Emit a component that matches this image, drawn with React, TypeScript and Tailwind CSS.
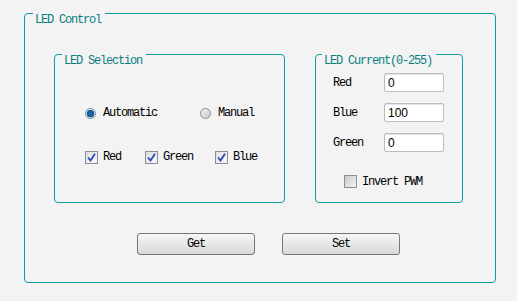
import React from 'react';

const font = "font-['Liberation_Mono',monospace] text-[12px] leading-[12px] tracking-[-1.2px]";

const GroupBox = ({
  title,
  titleOffset,
  className,
  children,
}: {
  title: string;
  titleOffset: string;
  className: string;
  children: React.ReactNode;
}) => {
  return (
    <fieldset className={`m-0 p-0 border border-[#129c9c] rounded-[4px] ${className}`}>
      <legend className={`${titleOffset} p-0 pt-[14px]`}>
        <span className={`block pl-[2px] pr-[4px] text-[#0a7e7e] ${font}`}>{title}</span>
      </legend>
      {children}
    </fieldset>
  );
};

const Radio = ({ checked, label, className }: { checked?: boolean; label: string; className: string }) => (
  <div className={`flex items-center gap-[7px] ${className}`}>
    <div
      className={`w-[11px] h-[11px] rounded-full border flex items-center justify-center ${
        checked
          ? 'border-[#6f8aa3] bg-gradient-to-b from-[#e8eef4] to-[#c4d2de]'
          : 'border-[#8d8d8d] bg-gradient-to-br from-[#f4f4f4] to-[#c9c9c9]'
      }`}
    >
      {checked && <div className="w-[5px] h-[5px] rounded-full bg-[#1a67b0] ring-1 ring-[#0d3f75]" />}
    </div>
    <span className={`text-black ${font}`}>{label}</span>
  </div>
);

const Check = ({ checked, label, className }: { checked?: boolean; label: string; className: string }) => (
  <div className={`flex items-center gap-[5px] ${className}`}>
    <div
      className={`w-[13px] h-[13px] border border-[#8b8f94] flex items-center justify-center ${
        checked ? 'bg-gradient-to-br from-[#dcdfe3] to-[#f7f8fa]' : 'bg-gradient-to-br from-[#c8c8c8] to-[#f5f5f5]'
      }`}
    >
      {checked && (
        <svg width="9" height="9" viewBox="0 0 9 9">
          <path d="M1 4.5 L3.5 7.5 L8 0.8" stroke="#2a47b5" strokeWidth="1.8" fill="none" />
        </svg>
      )}
    </div>
    <span className={`text-black ${font}`}>{label}</span>
  </div>
);

const ValueRow = ({ label, value }: { label: string; value: string }) => (
  <div className="flex items-center h-[19px]">
    <span className={`w-[51px] text-black ${font}`}>{label}</span>
    <div className="w-[60px] h-[19px] bg-white border border-[#b9bcc0] rounded-[2px] flex items-center pl-[3px] shadow-[inset_0_1px_0_#e4e4e4]">
      <span className="font-['Liberation_Sans',sans-serif] text-[12px] text-black">{value}</span>
    </div>
  </div>
);

const PushButton = ({ label }: { label: string }) => (
  <button className="w-[118px] h-[22px] border border-[#767676] rounded-[3px] bg-gradient-to-b from-[#f6f6f6] to-[#d8d8d8] flex items-center justify-center">
    <span className={`text-black ${font}`}>{label}</span>
  </button>
);

export default function App() {
  return (
    <div className="w-[517px] h-[301px] bg-[#f3f3f3] pl-[24px] overflow-hidden">
      <GroupBox title="LED Control" titleOffset="ml-[8px]" className="w-[472px] h-[283px]">
        <div className="flex pl-[29px] pt-[15px]">
          <GroupBox title="LED Selection" titleOffset="ml-[7px]" className="w-[231px] h-[162px]">
            <div className="flex flex-col pl-[30px] pt-[38px]">
              <div className="flex items-center h-[16px]">
                <Radio checked label="Automatic" className="w-[115px]" />
                <Radio label="Manual" className="" />
              </div>
              <div className="flex items-center h-[16px] mt-[28px]">
                <Check checked label="Red" className="w-[60px]" />
                <Check checked label="Green" className="w-[70px]" />
                <Check checked label="Blue" className="" />
              </div>
            </div>
          </GroupBox>
          <GroupBox title="LED Current(0-255)" titleOffset="ml-[6px]" className="w-[148px] h-[162px] ml-[30px]">
            <div className="flex flex-col pl-[17px] pt-[6px] gap-[11px]">
              <ValueRow label="Red" value="0" />
              <ValueRow label="Blue" value="100" />
              <ValueRow label="Green" value="0" />
              <Check label="Invert PWM" className="ml-[11px] mt-[12px]" />
            </div>
          </GroupBox>
        </div>
        <div className="flex gap-[27px] pl-[112px] mt-[30px]">
          <PushButton label="Get" />
          <PushButton label="Set" />
        </div>
      </GroupBox>
    </div>
  );
}
